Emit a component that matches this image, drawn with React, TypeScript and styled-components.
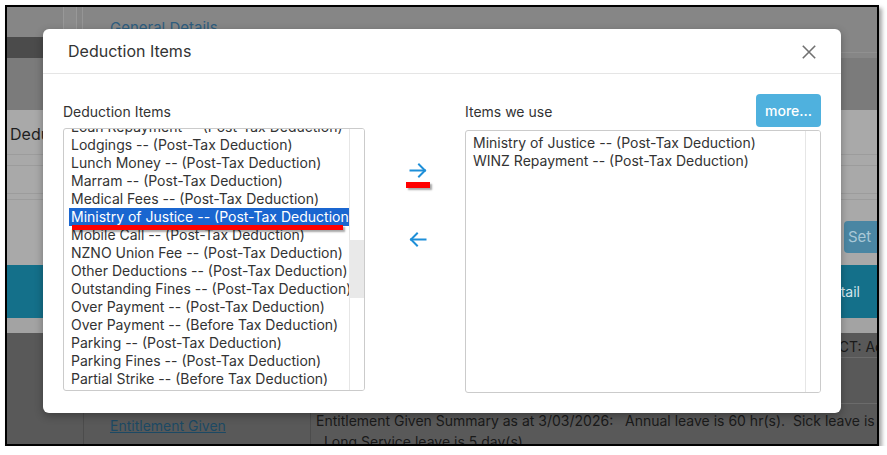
import React, { useLayoutEffect, useRef } from "react";
import styled, { createGlobalStyle } from "styled-components";

const GlobalStyle = createGlobalStyle`
  html, body { margin: 0; padding: 0; background: #ffffff; }
  body { font-family: Inter, "Noto Sans", sans-serif; }
  * { box-sizing: border-box; }
`;

/* ---------- screenshot frame ---------- */
const Frame = styled.div`
  position: relative;
  width: 874px;
  height: 441px;
  margin: 5px 0 0 5px;
  border: 2px solid #000;
  box-shadow: 3px 3px 4px rgba(0, 0, 0, 0.35);
  overflow: hidden;
  display: flex;
  flex-direction: column;
  background: #595959;
`;

/* ---------- dimmed page behind the dialog ---------- */
const TopArea = styled.div`
  display: flex;
  height: 51px;
  flex-shrink: 0;
  background: #868686;
`;
const SideStub = styled.div`
  width: 76px;
  display: flex;
  flex-direction: column;
`;
const SideTop = styled.div`
  height: 30px;
  display: flex;
  justify-content: flex-end;
  padding-right: 5px;
  border-right: 1px solid #959595;
`;
const SideBox = styled.div`
  width: 14px;
  border-left: 1px solid #989898;
  border-right: 1px solid #989898;
  background: #8b8b8b;
`;
const SideActive = styled.div`
  height: 21px;
  background: #4b4b4b;
`;
const TabsArea = styled.div`
  flex: 1;
  display: flex;
  flex-direction: column;
`;
const TabRow = styled.div`
  height: 46px;
  padding: 11px 0 0 27px;
  border-bottom: 1px solid #909090;
  font-size: 15px;
  line-height: 20px;
  color: #2e5d7e;
`;
const GreyBand = styled.div`
  height: 52px;
  flex-shrink: 0;
  background: #7b7b7b;
`;
const LightPanel = styled.div`
  height: 155px;
  flex-shrink: 0;
  background: #a9a9a9;
  display: flex;
  flex-direction: column;
`;
const PanelTitle = styled.div`
  height: 45px;
  padding: 14px 0 0 3px;
  font-size: 16px;
  line-height: 20px;
  color: #1e1e1e;
  border-bottom: 1px solid #9c9c9c;
`;
const PanelLine = styled.div<{ $h: number }>`
  height: ${(p) => p.$h}px;
  border-bottom: 1px solid #9c9c9c;
`;
const PanelActions = styled.div`
  flex: 1;
  display: flex;
  justify-content: flex-end;
  padding-top: 21px;
  margin-right: -12px;
`;
const DimButton = styled.div`
  width: 45px;
  height: 32px;
  border-radius: 4px;
  background: #4a86a3;
  color: #a9c8d7;
  font-size: 15px;
  line-height: 32px;
  padding-left: 4px;
`;
const TealBand = styled.div`
  height: 53px;
  flex-shrink: 0;
  background: #14708a;
  display: flex;
  align-items: center;
  justify-content: flex-end;
  padding-right: 17px;
  color: #d4e6ec;
  font-size: 14px;
`;
const LightStrip = styled.div`
  height: 15px;
  flex-shrink: 0;
  background: #a3a3a3;
`;
const DarkArea = styled.div`
  flex: 1;
  display: flex;
  background: #595959;
  color: #1a1a1a;
  font-size: 14px;
`;
const DarkGutter = styled.div`
  width: 77px;
  border-right: 1px solid #4c4c4c;
`;
const DarkMain = styled.div`
  flex: 1;
  display: flex;
  flex-direction: column;
  min-width: 0;
`;
const DarkRow = styled.div<{ $h: number; $pad?: number }>`
  height: ${(p) => p.$h}px;
  border-bottom: 1px solid #6b6b6b;
  padding-left: ${(p) => p.$pad ?? 0}px;
  display: flex;
  align-items: flex-end;
  white-space: nowrap;
  line-height: 18px;
  padding-bottom: 1px;
`;
const TableRow = styled.div`
  flex: 1;
  display: grid;
  grid-template-columns: 227px 1fr;
`;
const LinkCell = styled.div`
  padding: 12px 0 0 26px;
  border-right: 1px solid #4c4c4c;
  line-height: 20px;
`;
const DimLink = styled.span`
  color: #1c4964;
  text-decoration: underline;
`;
const SummaryCell = styled.div`
  padding: 6px 0 0 5px;
  line-height: 21px;
  white-space: pre;
  overflow: hidden;
`;

/* ---------- dialog ---------- */
const Modal = styled.div`
  position: absolute;
  left: 36px;
  top: 22px;
  width: 798px;
  height: 384px;
  background: #fff;
  border-radius: 6px;
  box-shadow: 0 3px 9px rgba(0, 0, 0, 0.3);
  display: flex;
  flex-direction: column;
  color: #333;
`;
const ModalHeader = styled.div`
  height: 45px;
  flex-shrink: 0;
  border-bottom: 1px solid #e5e5e5;
  display: flex;
  align-items: center;
  justify-content: space-between;
  padding: 0 25px 0 25px;
`;
const ModalTitle = styled.div`
  font-size: 16px;
  line-height: 20px;
  color: #333;
`;
const CloseButton = styled.button`
  width: 14px;
  height: 14px;
  padding: 0;
  border: 0;
  background: none;
  display: flex;
  margin-top: 1px;
`;
const ModalBody = styled.div`
  padding: 20px;
  display: grid;
  grid-template-columns: 302px 100px 356px;
`;
const Column = styled.div`
  display: flex;
  flex-direction: column;
`;
const LabelRow = styled.div<{ $h: number; $gap: number }>`
  height: ${(p) => p.$h}px;
  margin-bottom: ${(p) => p.$gap}px;
  display: flex;
  align-items: center;
  justify-content: space-between;
`;
const FieldLabel = styled.div`
  font-size: 14px;
  line-height: 18px;
  color: #333;
  margin-top: 2px;
`;
const MoreButton = styled.button`
  width: 65px;
  height: 33px;
  border: 0;
  border-radius: 4px;
  background: #4fb1de;
  color: #fff;
  font-family: Inter, "Noto Sans", sans-serif;
  font-size: 14px;
  font-weight: 500;
  padding: 0;
`;
const ListBox = styled.div`
  height: 263px;
  border: 1px solid #cbcbcb;
  border-radius: 3px;
  display: flex;
  overflow: hidden;
`;
const ListViewport = styled.div`
  flex: 1;
  min-width: 0;
  overflow: hidden;
  padding: 3px 0 0 5px;
`;
const Option = styled.div<{ $selected?: boolean }>`
  height: 18px;
  line-height: 18px;
  padding: 0 2px;
  font-size: 14px;
  white-space: nowrap;
  color: ${(p) => (p.$selected ? "#fff" : "#333")};
  background: ${(p) => (p.$selected ? "#1a66d0" : "transparent")};
`;
const ScrollTrack = styled.div`
  width: 15px;
  flex-shrink: 0;
  border-left: 1px solid #e6e6e6;
  background: #fff;
  display: flex;
  flex-direction: column;
`;
const ScrollThumb = styled.div<{ $top: number; $h: number }>`
  margin-top: ${(p) => p.$top}px;
  height: ${(p) => p.$h}px;
  background: #e9e9e9;
  margin-left: -1px;
`;
const MoveColumn = styled.div`
  display: flex;
  flex-direction: column;
  align-items: center;
  padding: 69px 0 0 5px;
  gap: 54px;
`;
const MoveButton = styled.button`
  border: 0;
  background: none;
  padding: 0;
  display: flex;
  width: 18px;
  height: 15px;
`;

/* ---------- red annotation marks ---------- */
const RedMark = styled.div<{ $x: number; $y: number; $w: number; $h: number }>`
  position: absolute;
  left: ${(p) => p.$x}px;
  top: ${(p) => p.$y}px;
  width: ${(p) => p.$w}px;
  height: ${(p) => p.$h}px;
  background: #ff0000;
  box-shadow: 2px 2px 2px rgba(0, 0, 0, 0.35);
`;

const Arrow = ({ dir }: { dir: "right" | "left" }) => (
  <svg width="18" height="15" viewBox="0 0 18 15" fill="none">
    <g
      stroke="#1e8fd8"
      strokeWidth="2"
      strokeLinecap="square"
      transform={dir === "left" ? "translate(18 0) scale(-1 1)" : undefined}
    >
      <path d="M1.5 7.5H16" />
      <path d="M10 1.5L16 7.5L10 13.5" />
    </g>
  </svg>
);

const CloseIcon = () => (
  <svg width="14" height="14" viewBox="0 0 14 14">
    <path d="M0.8 0.8L13.2 13.2M13.2 0.8L0.8 13.2" stroke="#717171" strokeWidth="1.6" />
  </svg>
);

const available = [
  "Loan Repayment -- (Post-Tax Deduction)",
  "Lodgings -- (Post-Tax Deduction)",
  "Lunch Money -- (Post-Tax Deduction)",
  "Marram -- (Post-Tax Deduction)",
  "Medical Fees -- (Post-Tax Deduction)",
  "Ministry of Justice -- (Post-Tax Deduction)",
  "Mobile Call -- (Post-Tax Deduction)",
  "NZNO Union Fee -- (Post-Tax Deduction)",
  "Other Deductions -- (Post-Tax Deduction)",
  "Outstanding Fines -- (Post-Tax Deduction)",
  "Over Payment -- (Post-Tax Deduction)",
  "Over Payment -- (Before Tax Deduction)",
  "Parking -- (Post-Tax Deduction)",
  "Parking Fines -- (Post-Tax Deduction)",
  "Partial Strike -- (Before Tax Deduction)",
  "Payroll Giving -- (Post-Tax Deduction)",
];
const used = [
  "Ministry of Justice -- (Post-Tax Deduction)",
  "WINZ Repayment -- (Post-Tax Deduction)",
];

export default function App() {
  const leftRef = useRef<HTMLDivElement>(null);
  useLayoutEffect(() => {
    if (leftRef.current) leftRef.current.scrollTop = 14;
  }, []);

  return (
    <>
      <GlobalStyle />
      <Frame>
        <TopArea>
          <SideStub>
            <SideTop>
              <SideBox />
            </SideTop>
            <SideActive />
          </SideStub>
          <TabsArea>
            <TabRow>General Details</TabRow>
          </TabsArea>
        </TopArea>
        <GreyBand />
        <LightPanel>
          <PanelTitle>Deductions</PanelTitle>
          <PanelLine $h={11} />
          <PanelLine $h={28} />
          <PanelLine $h={6} />
          <PanelActions>
            <DimButton>Set</DimButton>
          </PanelActions>
        </LightPanel>
        <TealBand>Detail</TealBand>
        <LightStrip />
        <DarkArea>
          <DarkGutter />
          <DarkMain>
            <DarkRow $h={25} $pad={696}>CONTRACT: Active</DarkRow>
            <DarkRow $h={46} />
            <TableRow>
              <LinkCell>
                <DimLink>Entitlement Given</DimLink>
              </LinkCell>
              <SummaryCell>
                {"Entitlement Given Summary as at 3/03/2026:   Annual leave is 60 hr(s).  Sick leave is 10 day(s).\n  Long Service leave is 5 day(s)."}
              </SummaryCell>
            </TableRow>
          </DarkMain>
        </DarkArea>

        <Modal>
          <ModalHeader>
            <ModalTitle>Deduction Items</ModalTitle>
            <CloseButton aria-label="Close">
              <CloseIcon />
            </CloseButton>
          </ModalHeader>
          <ModalBody>
            <Column>
              <LabelRow $h={34} $gap={0}>
                <FieldLabel>Deduction Items</FieldLabel>
              </LabelRow>
              <ListBox>
                <ListViewport ref={leftRef}>
                  {available.map((t) => (
                    <Option key={t} $selected={t.startsWith("Ministry")}>
                      {t}
                    </Option>
                  ))}
                </ListViewport>
                <ScrollTrack>
                  <ScrollThumb $top={111} $h={58} />
                </ScrollTrack>
              </ListBox>
            </Column>
            <MoveColumn>
              <MoveButton aria-label="Add">
                <Arrow dir="right" />
              </MoveButton>
              <MoveButton aria-label="Remove">
                <Arrow dir="left" />
              </MoveButton>
            </MoveColumn>
            <Column>
              <LabelRow $h={33} $gap={3}>
                <FieldLabel>Items we use</FieldLabel>
                <MoreButton>more...</MoreButton>
              </LabelRow>
              <ListBox>
                <ListViewport>
                  {used.map((t) => (
                    <Option key={t}>{t}</Option>
                  ))}
                </ListViewport>
                <ScrollTrack />
              </ListBox>
            </Column>
          </ModalBody>
        </Modal>

        <RedMark $x={65} $y={218} $w={271} $h={5} />
        <RedMark $x={399} $y={175} $w={24} $h={6} />
      </Frame>
    </>
  );
}
